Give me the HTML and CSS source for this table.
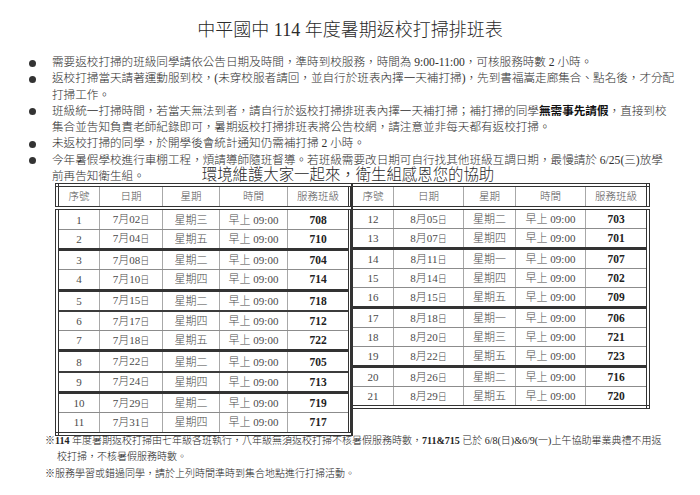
FILE: index.html
```html
<!DOCTYPE html>
<html lang="zh-Hant">
<head>
<meta charset="utf-8">
<title>中平國中 114 年度暑期返校打掃排班表</title>
<link rel="stylesheet" href="styles.css">
</head>
<body>
<div class="page">
  <h1 class="title">中平國中 114 年度暑期返校打掃排班表</h1>
  <ul class="notes">
    <li>需要返校打掃的班級同學請依公告日期及時間，準時到校服務，時間為 9:00-11:00，可核服務時數 2 小時。</li>
    <li>返校打掃當天請著運動服到校，(未穿校服者請回，並自行於班表內擇一天補打掃)，先到書福嵩走廊集合、點名後，才分配<br>打掃工作。</li>
    <li>班級統一打掃時間，若當天無法到者，請自行於返校打掃排班表內擇一天補打掃；補打掃的同學<b>無需事先請假</b>，直接到校<br>集合並告知負責老師紀錄即可，暑期返校打掃排班表將公告校網，請注意並非每天都有返校打掃。</li>
    <li>未返校打掃的同學，於開學後會統計通知仍需補打掃 2 小時。</li>
    <li>今年暑假學校進行車棚工程，煩請導師隨班督導。若班級需要改日期可自行找其他班級互調日期，最慢請於 6/25(三)放學<br>前再告知衛生組。<span class="slogan">環境維護大家一起來，衛生組感恩您的協助</span></li>
  </ul>

  <div class="tables">
    <table class="sched sched-left">
      <thead>
        <tr><th class="c1">序號</th><th class="c2">日期</th><th class="c3">星期</th><th class="c4">時間</th><th class="c5">服務班級</th></tr>
      </thead>
      <tbody>
        <tr><td>1</td><td>7月02<small>日</small></td><td>星期三</td><td>早上 09:00</td><td class="cls">708</td></tr>
        <tr class="wk"><td>2</td><td>7月04<small>日</small></td><td>星期五</td><td>早上 09:00</td><td class="cls">710</td></tr>
        <tr><td>3</td><td>7月08<small>日</small></td><td>星期二</td><td>早上 09:00</td><td class="cls">704</td></tr>
        <tr class="wk"><td>4</td><td>7月10<small>日</small></td><td>星期四</td><td>早上 09:00</td><td class="cls">714</td></tr>
        <tr class="mid"><td>5</td><td>7月15<small>日</small></td><td>星期二</td><td>早上 09:00</td><td class="cls">718</td></tr>
        <tr><td>6</td><td>7月17<small>日</small></td><td>星期四</td><td>早上 09:00</td><td class="cls">712</td></tr>
        <tr class="wk"><td>7</td><td>7月18<small>日</small></td><td>星期五</td><td>早上 09:00</td><td class="cls">722</td></tr>
        <tr class="mid"><td>8</td><td>7月22<small>日</small></td><td>星期二</td><td>早上 09:00</td><td class="cls">705</td></tr>
        <tr class="wk"><td>9</td><td>7月24<small>日</small></td><td>星期四</td><td>早上 09:00</td><td class="cls">713</td></tr>
        <tr><td>10</td><td>7月29<small>日</small></td><td>星期二</td><td>早上 09:00</td><td class="cls">719</td></tr>
        <tr><td>11</td><td>7月31<small>日</small></td><td>星期四</td><td>早上 09:00</td><td class="cls">717</td></tr>
      </tbody>
    </table>

    <div class="right-wrap">
      <table class="sched sched-right">
        <thead>
          <tr><th class="d1">序號</th><th class="d2">日期</th><th class="d3">星期</th><th class="d4">時間</th><th class="d5">服務班級</th></tr>
        </thead>
        <tbody>
          <tr><td>12</td><td>8月05<small>日</small></td><td>星期二</td><td>早上 09:00</td><td class="cls">703</td></tr>
          <tr class="wk"><td>13</td><td>8月07<small>日</small></td><td>星期四</td><td>早上 09:00</td><td class="cls">701</td></tr>
          <tr><td>14</td><td>8月11<small>日</small></td><td>星期一</td><td>早上 09:00</td><td class="cls">707</td></tr>
          <tr><td>15</td><td>8月14<small>日</small></td><td>星期四</td><td>早上 09:00</td><td class="cls">702</td></tr>
          <tr class="wk"><td>16</td><td>8月15<small>日</small></td><td>星期五</td><td>早上 09:00</td><td class="cls">709</td></tr>
          <tr><td>17</td><td>8月18<small>日</small></td><td>星期一</td><td>早上 09:00</td><td class="cls">706</td></tr>
          <tr><td>18</td><td>8月20<small>日</small></td><td>星期三</td><td>早上 09:00</td><td class="cls">721</td></tr>
          <tr class="wk"><td>19</td><td>8月22<small>日</small></td><td>星期五</td><td>早上 09:00</td><td class="cls">723</td></tr>
          <tr><td>20</td><td>8月26<small>日</small></td><td>星期二</td><td>早上 09:00</td><td class="cls">716</td></tr>
          <tr><td>21</td><td>8月29<small>日</small></td><td>星期五</td><td>早上 09:00</td><td class="cls">720</td></tr>
        </tbody>
      </table>
    </div>
  </div>

  <div class="foot">
    <p>※<b>114</b> 年度暑期返校打掃由七年級各班執行，八年級無須返校打掃不核暑假服務時數，<b>711&amp;715</b> 已於 6/8(日)&amp;6/9(一)上午協助畢業典禮不用返</p>
    <p class="cont">校打掃，不核暑假服務時數。</p>
    <p>※服務學習或錯過同學，請於上列時間準時到集合地點進行打掃活動。</p>
  </div>
</div>
</body>
</html>
```

FILE: styles.css
```css
html, body {
  margin: 0;
  padding: 0;
  background: #ffffff;
}

body {
  font-family: "Liberation Serif", "Noto Sans CJK TC", serif;
  color: #222222;
}

.page {
  width: 700px;
  height: 495px;
  overflow: hidden;
  padding-top: 19px;
  box-sizing: border-box;
}

.title {
  margin: 0;
  text-align: center;
  font-size: 18px;
  line-height: 22px;
  font-weight: 300;
  color: #2a2a2a;
}

.notes {
  list-style: none;
  margin: 14px 0 0;
  padding: 0 0 0 52px;
  font-size: 11.6px;
  line-height: 16.3px;
  white-space: nowrap;
  color: #2e2e2e;
  font-weight: 300;
}

.notes li {
  position: relative;
}

.notes li::before {
  content: "";
  position: absolute;
  left: -23px;
  top: 4.6px;
  width: 7px;
  height: 7px;
  border-radius: 50%;
  background: #333333;
}

.notes b {
  font-weight: 700;
  color: #111111;
}

.slogan {
  font-size: 15.4px;
  line-height: 1px;
  margin-left: 57px;
  color: #2a2a2a;
}

.tables {
  display: flex;
  align-items: flex-start;
  margin: -2px 0 0 55px;
}

.sched {
  border-collapse: collapse;
  text-align: center;
  font-size: 11px;
  color: #4a4a4a;
  font-weight: 300;
}

.sched th {
  font-weight: 300;
  font-size: 10.5px;
  color: #555555;
  height: 17px;
  padding: 0 0 2px;
  border-bottom: 4px double #333333;
  border-left: 1px solid #a8a8a8;
  border-right: 1px solid #a8a8a8;
}

.sched td {
  padding: 0;
  height: 18.3px;
  line-height: 14px;
  border-left: 1px solid #a8a8a8;
  border-right: 1px solid #a8a8a8;
  border-bottom: 1px solid #8c8c8c;
}

.sched small {
  font-size: 9px;
}

.sched .cls {
  font-weight: 700;
  font-size: 11.5px;
  color: #222222;
}

.sched tr.wk td {
  border-bottom: 3px solid #333333;
}

.sched tr.mid td {
  border-bottom: 2px solid #3c3c3c;
}

.sched-left {
  border: 4px double #333333;
  border-right: 3px double #333333;
}

.sched-left .c1 { width: 40px; }
.sched-left .c2 { width: 62px; }
.sched-left .c3 { width: 56px; }
.sched-left .c4 { width: 67px; }
.sched-left .c5 { width: 60px; }

.right-wrap {
  align-self: stretch;
  border-left: 2px solid #333333;
}

.sched-right {
  border: 4px double #333333;
  border-left: none;
}

.sched-right th:first-child,
.sched-right td:first-child {
  border-left: none;
}

.sched-right td {
  height: 18px;
}

.sched-right .d1 { width: 40px; }
.sched-right .d2 { width: 69px; }
.sched-right .d3 { width: 51px; }
.sched-right .d4 { width: 69px; }
.sched-right .d5 { width: 60px; }

.foot {
  margin: -3px 0 0 45px;
  font-size: 10px;
  line-height: 16.5px;
  color: #222222;
  font-weight: 300;
}

.foot p {
  margin: 0;
  white-space: nowrap;
}

.foot b {
  font-weight: 700;
}

.foot .cont {
  padding-left: 12px;
}
```
